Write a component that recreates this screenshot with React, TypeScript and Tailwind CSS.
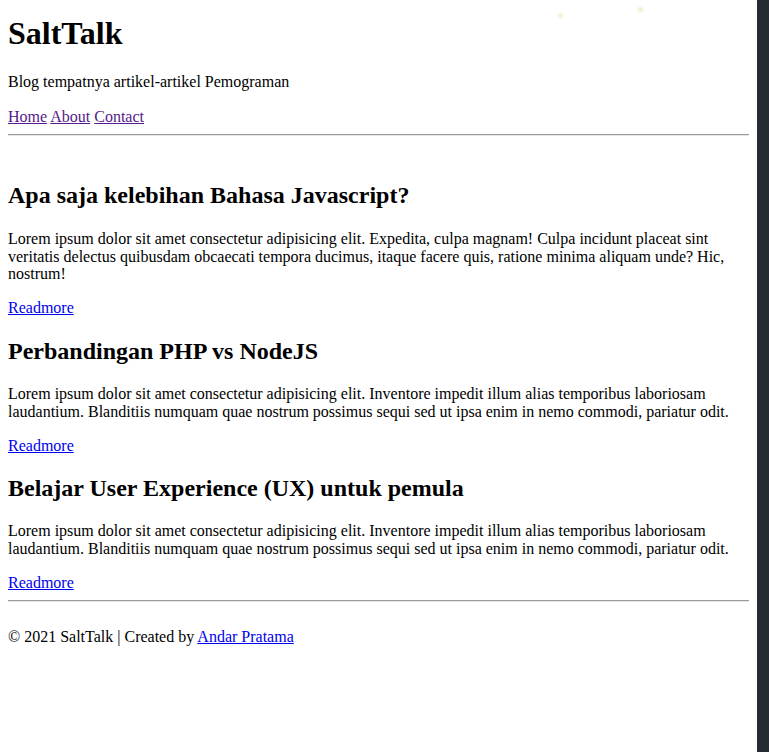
import React from 'react';

type Post = {
  title: string;
  body: string;
};

const posts: Post[] = [
  {
    title: 'Apa saja kelebihan Bahasa Javascript?',
    body:
      'Lorem ipsum dolor sit amet consectetur adipisicing elit. Expedita, culpa magnam! Culpa incidunt placeat sint veritatis delectus quibusdam obcaecati tempora ducimus, itaque facere quis, ratione minima aliquam unde? Hic, nostrum!',
  },
  {
    title: 'Perbandingan PHP vs NodeJS',
    body:
      'Lorem ipsum dolor sit amet consectetur adipisicing elit. Inventore impedit illum alias temporibus laboriosam laudantium. Blanditiis numquam quae nostrum possimus sequi sed ut ipsa enim in nemo commodi, pariatur odit.',
  },
  {
    title: 'Belajar User Experience (UX) untuk pemula',
    body:
      'Lorem ipsum dolor sit amet consectetur adipisicing elit. Inventore impedit illum alias temporibus laboriosam laudantium. Blanditiis numquam quae nostrum possimus sequi sed ut ipsa enim in nemo commodi, pariatur odit.',
  },
];

const Rule = () => (
  <div className="my-2 h-[2px] border-t border-b border-t-[#9a9a9a] border-b-[#e6e6e6]" />
);

const Article = ({ post }: { post: Post }) => (
  <article>
    <h2 className="my-[19.92px] text-[24px] font-bold leading-[1.15]">{post.title}</h2>
    <p className="my-4 leading-[17.8px]">{post.body}</p>
    <a href="#" className="text-[#0000ee] underline">
      Readmore
    </a>
  </article>
);

export default function App() {
  return (
    <div className="flex min-h-screen bg-white text-black font-['Liberation_Serif',serif] text-[16px] leading-[1.15]">
      <div className="relative flex-1 px-2 pb-8">
        {/* faint specks at the top */}
        <span className="absolute left-[558px] top-[13px] h-[5px] w-[5px] rounded-full bg-[#f1efcf] blur-[1px]" />
        <span className="absolute left-[638px] top-[7px] h-[5px] w-[5px] rounded-full bg-[#f1efcf] blur-[1px]" />

        <header className="pt-[15px]">
          <h1 className="mb-[21.44px] text-[32px] font-bold leading-[1.15]">SaltTalk</h1>
          <p className="my-4">Blog tempatnya artikel-artikel Pemograman</p>
          <nav className="mt-4">
            <a href="#" className="text-[#551a8b] underline">Home</a>{' '}
            <a href="#" className="text-[#551a8b] underline">About</a>{' '}
            <a href="#" className="text-[#551a8b] underline">Contact</a>
          </nav>
          <Rule />
        </header>

        <main className="pt-[18.4px]">
          {posts.map((p) => (
            <Article key={p.title} post={p} />
          ))}
        </main>

        <footer>
          <Rule />
          <p className="mt-[26px]">
            © 2021 SaltTalk | Created by{' '}
            <a href="#" className="text-[#0000ee] underline">Andar Pratama</a>
          </p>
        </footer>
      </div>
      <aside className="w-[12px] shrink-0 bg-[#262a33]" />
    </div>
  );
}
